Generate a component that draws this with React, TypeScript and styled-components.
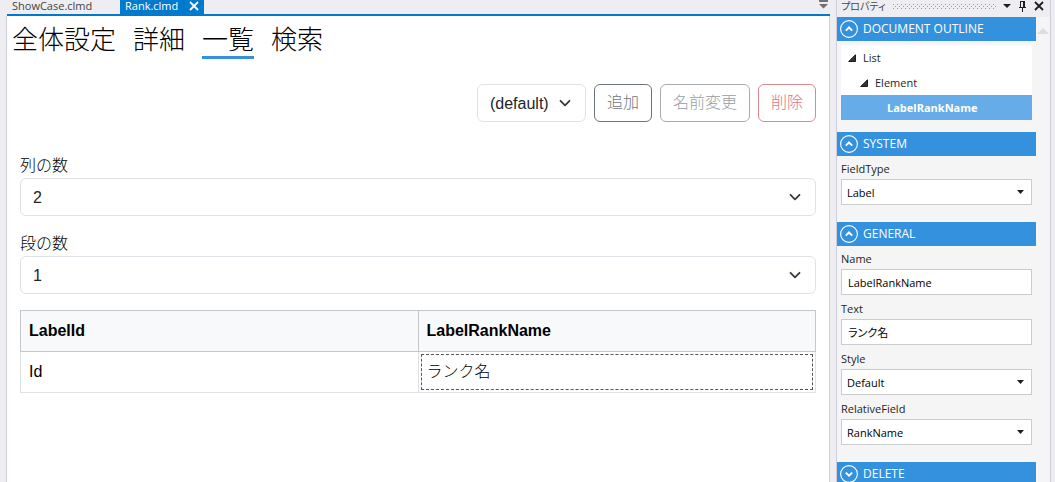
import React, { useId } from "react";
import styled, { createGlobalStyle } from "styled-components";

const GlobalStyle = createGlobalStyle`
  *, *::before, *::after { box-sizing: border-box; }
  body {
    margin: 0;
    background: #eeeef2;
    color: #212529;
    font-family: "Liberation Sans", "Noto Sans CJK JP", sans-serif;
    font-size: 16px;
  }
  button, input, select { font: inherit; color: inherit; margin: 0; }
`;

const Workspace = styled.div`
  display: flex;
  gap: 6px;
  height: 100vh;
  padding: 0 4px 0 6px;
  overflow: hidden;
`;

const uiFont = `"Open Sans", "Noto Sans CJK JP", sans-serif`;

/* Document area */

const DocumentArea = styled.div`
  flex: 1;
  min-width: 0;
  display: flex;
  flex-direction: column;
`;

const FileTabs = styled.div`
  display: flex;
  align-items: flex-start;
  margin-left: 1px;
  border-bottom: 2px solid #007acc;
  font-family: ${uiFont};
  font-size: 11px;
`;

const FileTab = styled.button<{ $active?: boolean }>`
  display: flex;
  align-items: flex-start;
  justify-content: ${(p) => (p.$active ? "space-between" : "flex-start")};
  height: 14px;
  min-width: ${(p) => (p.$active ? "84px" : "113px")};
  padding: 0 5px;
  border: 0;
  background: ${(p) => (p.$active ? "#007acc" : "transparent")};
  color: ${(p) => (p.$active ? "#fff" : "#444")};
  line-height: 12px;
  text-align: left;
`;

const TabMenu = styled.button`
  display: flex;
  margin-left: auto;
  padding: 0 2px;
  border: 0;
  background: none;
`;

const Page = styled.main`
  flex: 1;
  padding: 8px 13px;
  border: solid #cccedb;
  border-width: 0 1px;
  background: #fff;
`;

const ViewNav = styled.nav`
  display: flex;
  gap: 17px;
  margin-left: -8px;
`;

const ViewLink = styled.a<{ $active?: boolean }>`
  padding-bottom: 4px;
  border-bottom: 3px solid ${(p) => (p.$active ? "#3391de" : "transparent")};
  color: #000;
  font-family: "Noto Sans CJK JP", sans-serif;
  font-size: 26px;
  font-weight: 300;
  line-height: 28px;
  text-decoration: none;
`;

const Toolbar = styled.div`
  display: flex;
  justify-content: flex-end;
  gap: 8px;
  margin: 25px 0 32px;
`;

const OutlineButton = styled.button<{ $tone: string; $text: string }>`
  height: 38px;
  padding: 0 12px;
  border: 1px solid ${(p) => p.$tone};
  border-radius: 6px;
  background: #fff;
  color: ${(p) => p.$text};
  font-weight: 300;
  line-height: 24px;
`;

const SelectFrame = styled.div`
  display: grid;
  align-items: center;
  > * { grid-area: 1 / 1; }
  > svg { justify-self: end; pointer-events: none; }
`;

const FormSelectFrame = styled(SelectFrame)`
  > svg { margin-right: 15px; }
`;

const FormSelect = styled.select`
  appearance: none;
  width: 100%;
  height: 38px;
  padding: 0 36px 0 12px;
  border: 1px solid #dee2e6;
  border-radius: 6px;
  background: #fff;
`;

const FormGroup = styled.div`
  margin-bottom: 16px;
`;

const FormLabel = styled.label`
  display: block;
  color: #000;
  font-weight: 300;
  line-height: 24px;
`;

const DataTable = styled.table`
  width: 100%;
  table-layout: fixed;
  border-collapse: collapse;
  color: #000;
  line-height: 24px;
`;

const HeadCell = styled.th`
  height: 41px;
  padding: 0 8px;
  border: 1px solid #c6c7c8;
  background: #f8f9fa;
  text-align: left;
`;

const Cell = styled.td<{ $selected?: boolean }>`
  height: 41px;
  padding: ${(p) => (p.$selected ? "2px" : "0 8px")};
  border: 1px solid #dee2e6;
  font-weight: 300;
`;

const SelectedField = styled.div`
  padding: 5px;
  border: 1px dashed #555;
`;

/* Property panel */

const Panel = styled.aside`
  flex: 0 0 215px;
  min-width: 0;
  display: flex;
  flex-direction: column;
  border: solid #cccedb;
  border-width: 0 1px;
  background: #f5f5f5;
  color: #1e1e1e;
  font-family: ${uiFont};
  font-size: 11px;
`;

const PanelTitle = styled.header`
  display: flex;
  align-items: flex-start;
  gap: 7px;
  height: 17px;
  padding: 0 6px 0 4px;
  background: #eeeef2;
  color: #444;
`;

const TitleText = styled.span`
  font-size: 10px;
  line-height: 13px;
  font-feature-settings: "palt";
`;

const Grip = styled.svg`
  flex: 1;
  width: 0;
  height: 5px;
  margin-top: 4px;
`;

const TitleButton = styled.button`
  display: flex;
  padding: 0;
  border: 0;
  background: none;
`;

const PanelBody = styled.div`
  display: flex;
  flex: 1;
  min-height: 0;
`;

const Sections = styled.div`
  flex: 1;
  min-width: 0;
  overflow: hidden;
`;

const ScrollTrack = styled.div`
  flex: 0 0 14px;
  padding: 5px 0 0 1px;
`;

const SectionHeader = styled.button`
  display: flex;
  align-items: center;
  gap: 4px;
  width: 100%;
  height: 24px;
  padding: 0 3px;
  border: 0;
  background: #3391de;
  color: #fff;
  font-size: 12px;
  line-height: 24px;
`;

const Outline = styled.div`
  margin: 4px 4px 12px;
  background: #fff;
`;

const OutlineItem = styled.div<{ $level: number; $selected?: boolean }>`
  display: flex;
  align-items: center;
  gap: 7px;
  height: 25px;
  padding-left: ${(p) => 7 + p.$level * 12}px;
  background: ${(p) => (p.$selected ? "#66ace8" : "transparent")};
  color: ${(p) => (p.$selected ? "#fff" : "#1e1e1e")};
  font-weight: ${(p) => (p.$selected ? 700 : 400)};
`;

const OutlineToggle = styled.span`
  display: flex;
  width: 8px;
`;

const Properties = styled.div`
  display: flex;
  flex-direction: column;
  gap: 1px;
  padding: 0 4px 17px;
`;

const PropertyLabel = styled.label`
  display: block;
  padding-top: 2px;
  line-height: 21px;
`;

const PropertyInput = styled.input`
  display: block;
  width: 100%;
  height: 26px;
  padding: 0 6px;
  border: 1px solid #ccc;
  background: #fff;
  color: #000;
  font-feature-settings: "palt";
`;

const PropertySelect = styled.select`
  appearance: none;
  width: 100%;
  height: 26px;
  padding: 0 20px 0 5px;
  border: 1px solid #ccc;
  background: #fff;
  color: #000;
`;

const PropertySelectFrame = styled(SelectFrame)`
  > svg { margin-right: 8px; }
`;

const Chevron = () => (
  <svg width="12" height="12" viewBox="0 0 12 12" fill="none" stroke="#343a40" strokeWidth="1.8" strokeLinecap="round" strokeLinejoin="round" aria-hidden="true">
    <path d="m1.500 3.800 4.500 4.500 4.500-4.500" />
  </svg>
);

const Caret = () => (
  <svg width="7" height="4" viewBox="0 0 7 4" fill="#1e1e1e" aria-hidden="true">
    <path d="M0 0h7L3.500 4z" />
  </svg>
);

const CircleChevron = ({ open }: { open: boolean }) => (
  <svg width="19" height="19" viewBox="0 0 19 19" fill="none" stroke="#fff" aria-hidden="true">
    <circle cx="9" cy="9" r="8.400" strokeWidth="1.100" />
    <path d={open ? "M5.800 10.600 9 7.500 12.200 10.600" : "M5.800 7.600 9 10.700 12.200 7.600"} strokeWidth="2" />
  </svg>
);

const Expanded = () => (
  <svg width="8" height="8" viewBox="0 0 8 8" aria-hidden="true">
    <path d="M7.5 .7v6.8H.7z" fill="#333" stroke="#1e1e1e" />
  </svg>
);

function Choice({ label, value }: { label: string; value: string }) {
  const id = useId();
  return (
    <FormGroup>
      <FormLabel htmlFor={id}>{label}</FormLabel>
      <FormSelectFrame>
        <FormSelect id={id} defaultValue={value}>
          <option>{value}</option>
        </FormSelect>
        <Chevron />
      </FormSelectFrame>
    </FormGroup>
  );
}

function Property({ label, value, options }: { label: string; value: string; options?: boolean }) {
  const id = useId();
  return (
    <div>
      <PropertyLabel htmlFor={id}>{label}</PropertyLabel>
      {options ? (
        <PropertySelectFrame>
          <PropertySelect id={id} defaultValue={value}>
            <option>{value}</option>
          </PropertySelect>
          <Caret />
        </PropertySelectFrame>
      ) : (
        <PropertyInput id={id} type="text" defaultValue={value} />
      )}
    </div>
  );
}

function Section({ title, open = true, children }: { title: string; open?: boolean; children?: React.ReactNode }) {
  return (
    <section>
      <SectionHeader aria-expanded={open}>
        <CircleChevron open={open} />
        {title}
      </SectionHeader>
      {children}
    </section>
  );
}

export default function App() {
  return (
    <>
      <GlobalStyle />
      <Workspace>
        <DocumentArea>
          <FileTabs>
            <FileTab>ShowCase.clmd</FileTab>
            <FileTab $active>
              Rank.clmd
              <svg width="10" height="11" viewBox="0 0 10 11" stroke="#fff" strokeWidth="1.8" aria-hidden="true">
                <path d="m1 2 8 8M9 2l-8 8" />
              </svg>
            </FileTab>
            <TabMenu aria-label="ファイル一覧">
              <svg width="9" height="9" viewBox="0 0 9 9" fill="#717171" aria-hidden="true">
                <path d="M0 0h9v2H0zM0 4h9L4.500 8.500z" />
              </svg>
            </TabMenu>
          </FileTabs>
          <Page>
            <ViewNav>
              <ViewLink href="#settings">全体設定</ViewLink>
              <ViewLink href="#detail">詳細</ViewLink>
              <ViewLink href="#list" $active>一覧</ViewLink>
              <ViewLink href="#search">検索</ViewLink>
            </ViewNav>
            <Toolbar>
              <FormSelectFrame>
                <FormSelect aria-label="レイアウト" defaultValue="(default)">
                  <option>(default)</option>
                </FormSelect>
                <Chevron />
              </FormSelectFrame>
              <OutlineButton $tone="#6c757d" $text="#6c757d">追加</OutlineButton>
              <OutlineButton $tone="#a7acb1" $text="#989da2" disabled>名前変更</OutlineButton>
              <OutlineButton $tone="#df868e" $text="#dc7580" disabled>削除</OutlineButton>
            </Toolbar>
            <Choice label="列の数" value="2" />
            <Choice label="段の数" value="1" />
            <DataTable>
              <thead>
                <tr>
                  <HeadCell>LabelId</HeadCell>
                  <HeadCell>LabelRankName</HeadCell>
                </tr>
              </thead>
              <tbody>
                <tr>
                  <Cell>Id</Cell>
                  <Cell $selected>
                    <SelectedField>ランク名</SelectedField>
                  </Cell>
                </tr>
              </tbody>
            </DataTable>
          </Page>
        </DocumentArea>
        <Panel>
          <PanelTitle>
            <TitleText>プロパティ</TitleText>
            <Grip aria-hidden="true">
              <defs>
                <pattern id="grip-dots" width="4" height="4" patternUnits="userSpaceOnUse">
                  <path d="M0 0h1v1H0zM2 2h1v1H2z" fill="#999" shapeRendering="crispEdges" />
                </pattern>
              </defs>
              <rect width="100%" height="5" fill="url(#grip-dots)" />
            </Grip>
            <TitleButton aria-label="メニュー">
              <svg width="8" height="12" viewBox="0 0 8 12" fill="#1e1e1e" aria-hidden="true">
                <path d="M0 4h8L4 8z" />
              </svg>
            </TitleButton>
            <TitleButton aria-label="固定">
              <svg width="9" height="12" viewBox="0 0 9 12" fill="#1e1e1e" aria-hidden="true">
                <path d="M2 1h5v6h1v1H5v4H4V8H1V7h1zM3 2v5h2V2z" fillRule="evenodd" />
              </svg>
            </TitleButton>
            <TitleButton aria-label="閉じる">
              <svg width="10" height="12" viewBox="0 0 10 12" stroke="#1e1e1e" strokeWidth="1.800" aria-hidden="true">
                <path d="m1 2 8 8M9 2l-8 8" />
              </svg>
            </TitleButton>
          </PanelTitle>
          <PanelBody>
            <Sections>
              <Section title="DOCUMENT OUTLINE">
                <Outline role="tree">
                  <OutlineItem role="treeitem" $level={0}>
                    <OutlineToggle><Expanded /></OutlineToggle>
                    List
                  </OutlineItem>
                  <OutlineItem role="treeitem" $level={1}>
                    <OutlineToggle><Expanded /></OutlineToggle>
                    Element
                  </OutlineItem>
                  <OutlineItem role="treeitem" $level={2} $selected>
                    <OutlineToggle />
                    LabelRankName
                  </OutlineItem>
                </Outline>
              </Section>
              <Section title="SYSTEM">
                <Properties>
                  <Property label="FieldType" value="Label" options />
                </Properties>
              </Section>
              <Section title="GENERAL">
                <Properties>
                  <Property label="Name" value="LabelRankName" />
                  <Property label="Text" value="ランク名" />
                  <Property label="Style" value="Default" options />
                  <Property label="RelativeField" value="RankName" options />
                </Properties>
              </Section>
              <Section title="DELETE" open={false} />
            </Sections>
            <ScrollTrack>
              <svg width="12" height="6" viewBox="0 0 12 6" fill="#dcdcdc" aria-hidden="true">
                <path d="M0 6h12L6 0z" />
              </svg>
            </ScrollTrack>
          </PanelBody>
        </Panel>
      </Workspace>
    </>
  );
}
